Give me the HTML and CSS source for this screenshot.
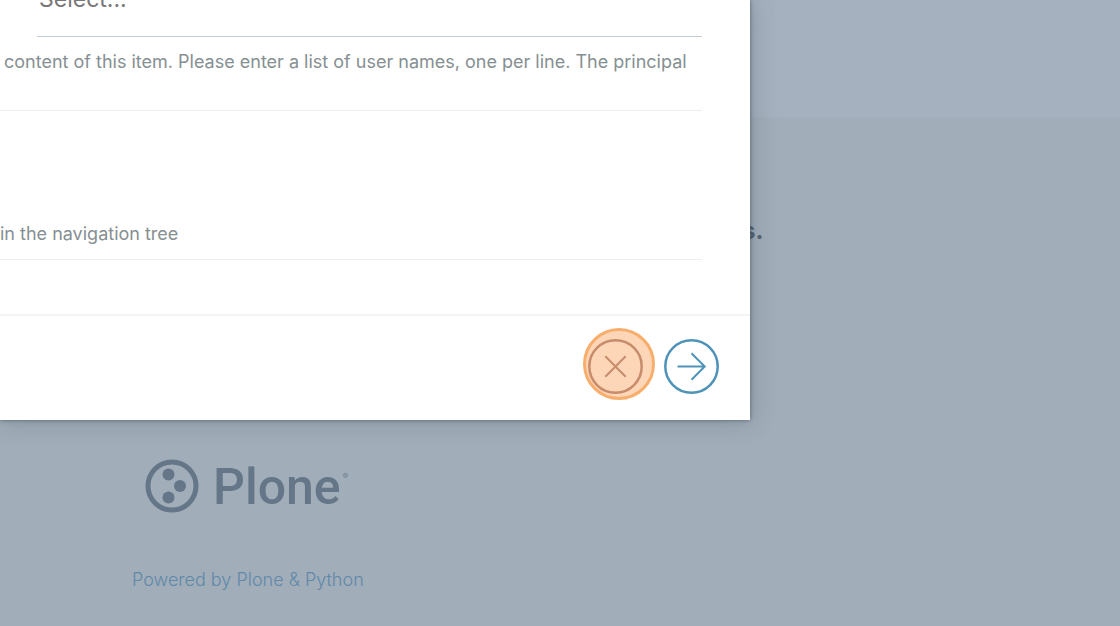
FILE: index.html
```
<!DOCTYPE html>
<html lang="en">
<head>
<meta charset="utf-8">
<title>Plone</title>
<link rel="stylesheet" href="styles.css">
</head>
<body>
<div class="page">
  <header class="page-top"></header>
  <main class="page-content"><p class="lead">s.</p></main>
  <footer class="page-footer">
    <div class="brand">
      <svg class="brand-mark" viewBox="0 0 54 54" aria-hidden="true">
        <circle class="mark-ring" cx="27" cy="27" r="24"/>
        <circle cx="23.5" cy="15.5" r="6"/>
        <circle cx="35" cy="27" r="6"/>
        <circle cx="23.5" cy="38.5" r="6"/>
      </svg>
      <span class="brand-name">Plone</span>
      <span class="brand-reg">®</span>
    </div>
    <a class="powered" href="#">Powered by Plone &amp; Python</a>
  </footer>
</div>
<div class="modal" role="dialog" aria-label="Edit">
  <form class="modal-form">
    <div class="field field-select">
      <select class="select" aria-label="Users"><option>Select...</option></select>
      <p class="help help-users">content of this item. Please enter a list of user names, one per line. The principal</p>
    </div>
    <div class="field field-nav">
      <p class="help">in the navigation tree</p>
    </div>
    <div class="actions">
      <button class="action cancel" type="button" aria-label="Cancel">
        <svg viewBox="0 0 56 56" aria-hidden="true"><circle cx="28.5" cy="28.5" r="26.2"/><path class="thin" d="M18.3 18.3 38.7 38.7M38.7 18.3 18.3 38.7"/></svg>
        <span class="click-mark"></span>
      </button>
      <button class="action next" type="button" aria-label="Next">
        <svg viewBox="0 0 56 56" aria-hidden="true"><circle cx="28.5" cy="28.5" r="26.2"/><path class="thin" d="M14.5 28.5H41.5M28.5 15.3 41.7 28.5 28.5 41.7"/></svg>
      </button>
    </div>
  </form>
</div>
</body>
</html>
```
FILE: styles.css
```
* { box-sizing: border-box; }
body {
  margin: 0;
  background: #a1adb9;
  font-family: Inter, "Liberation Sans", sans-serif;
  overflow: hidden;
}
.page { display: flex; flex-direction: column; min-height: 100vh; }
.page-top { height: 117px; background: #a5b1be; }
.page-content { height: 323px; padding: 100px 0 0 742px; }
.lead { margin: 0; font-size: 24px; font-weight: 700; line-height: 28px; color: #566270; }
.page-footer { padding: 19px 0 0 132px; }
.brand { display: flex; align-items: center; height: 54px; padding-left: 13px; color: #647687; }
.brand-mark { width: 54px; height: 54px; fill: currentColor; }
.mark-ring { fill: none; stroke: currentColor; stroke-width: 5; }
.brand-name { margin-left: 14px; padding-top: 2px; font-family: Roboto, sans-serif; font-size: 50px; font-weight: 500; line-height: 54px; }
.brand-reg { align-self: flex-start; margin: 12px 0 0 2px; font-size: 8px; line-height: 10px; }
.powered {
  display: inline-block;
  margin-top: 52px;
  font-size: 18px;
  font-weight: 300;
  line-height: 30px;
  color: #6089a8;
  text-decoration: none;
}
.modal {
  position: absolute;
  top: 0;
  left: 0;
  right: 370px;
  background: #fff;
  box-shadow: 0 0 4px rgba(50, 62, 75, .65), 0 0 24px rgba(60, 75, 90, .3);
}
.modal-form { display: flow-root; }
.field { margin-right: 48px; border-bottom: 1px solid #eceeef; }
.field-select { display: flow-root; height: 111px; }
.field-nav { height: 149px; padding-top: 108px; }
.select {
  display: block;
  width: calc(100% - 37px);
  height: 76px;
  margin: -39px 0 0 37px;
  padding: 0 2px;
  border: 0;
  border-bottom: 1px solid #c2ccd2;
  border-radius: 0;
  background: none;
  appearance: none;
  color: #777;
  font: 400 23px Inter, sans-serif;
}
.help { margin: 0; font-size: 18px; font-weight: 400; line-height: 30px; color: #868f92; white-space: nowrap; }
.help-users { margin-top: 10px; padding-left: 4px; }
.actions {
  display: flex;
  justify-content: flex-end;
  gap: 20px;
  height: 106px;
  margin-top: 54px;
  padding: 22px 31px 0 0;
  border-top: 2px solid #f3f4f4;
}
.action { position: relative; width: 56px; height: 56px; padding: 0; border: 0; background: none; }
.action svg { display: block; width: 56px; height: 56px; fill: none; stroke: currentColor; stroke-width: 2.5; }
.action .thin { stroke-width: 2; }
.next { color: #4f93b8; }
.cancel { color: #c78c6b; }
.cancel svg { position: relative; z-index: 1; }
.click-mark {
  position: absolute;
  top: -10px;
  left: -4px;
  width: 72px;
  height: 72px;
  border: 3px solid #f7ae6c;
  border-radius: 50%;
  background: #fdd5b7;
}
```
